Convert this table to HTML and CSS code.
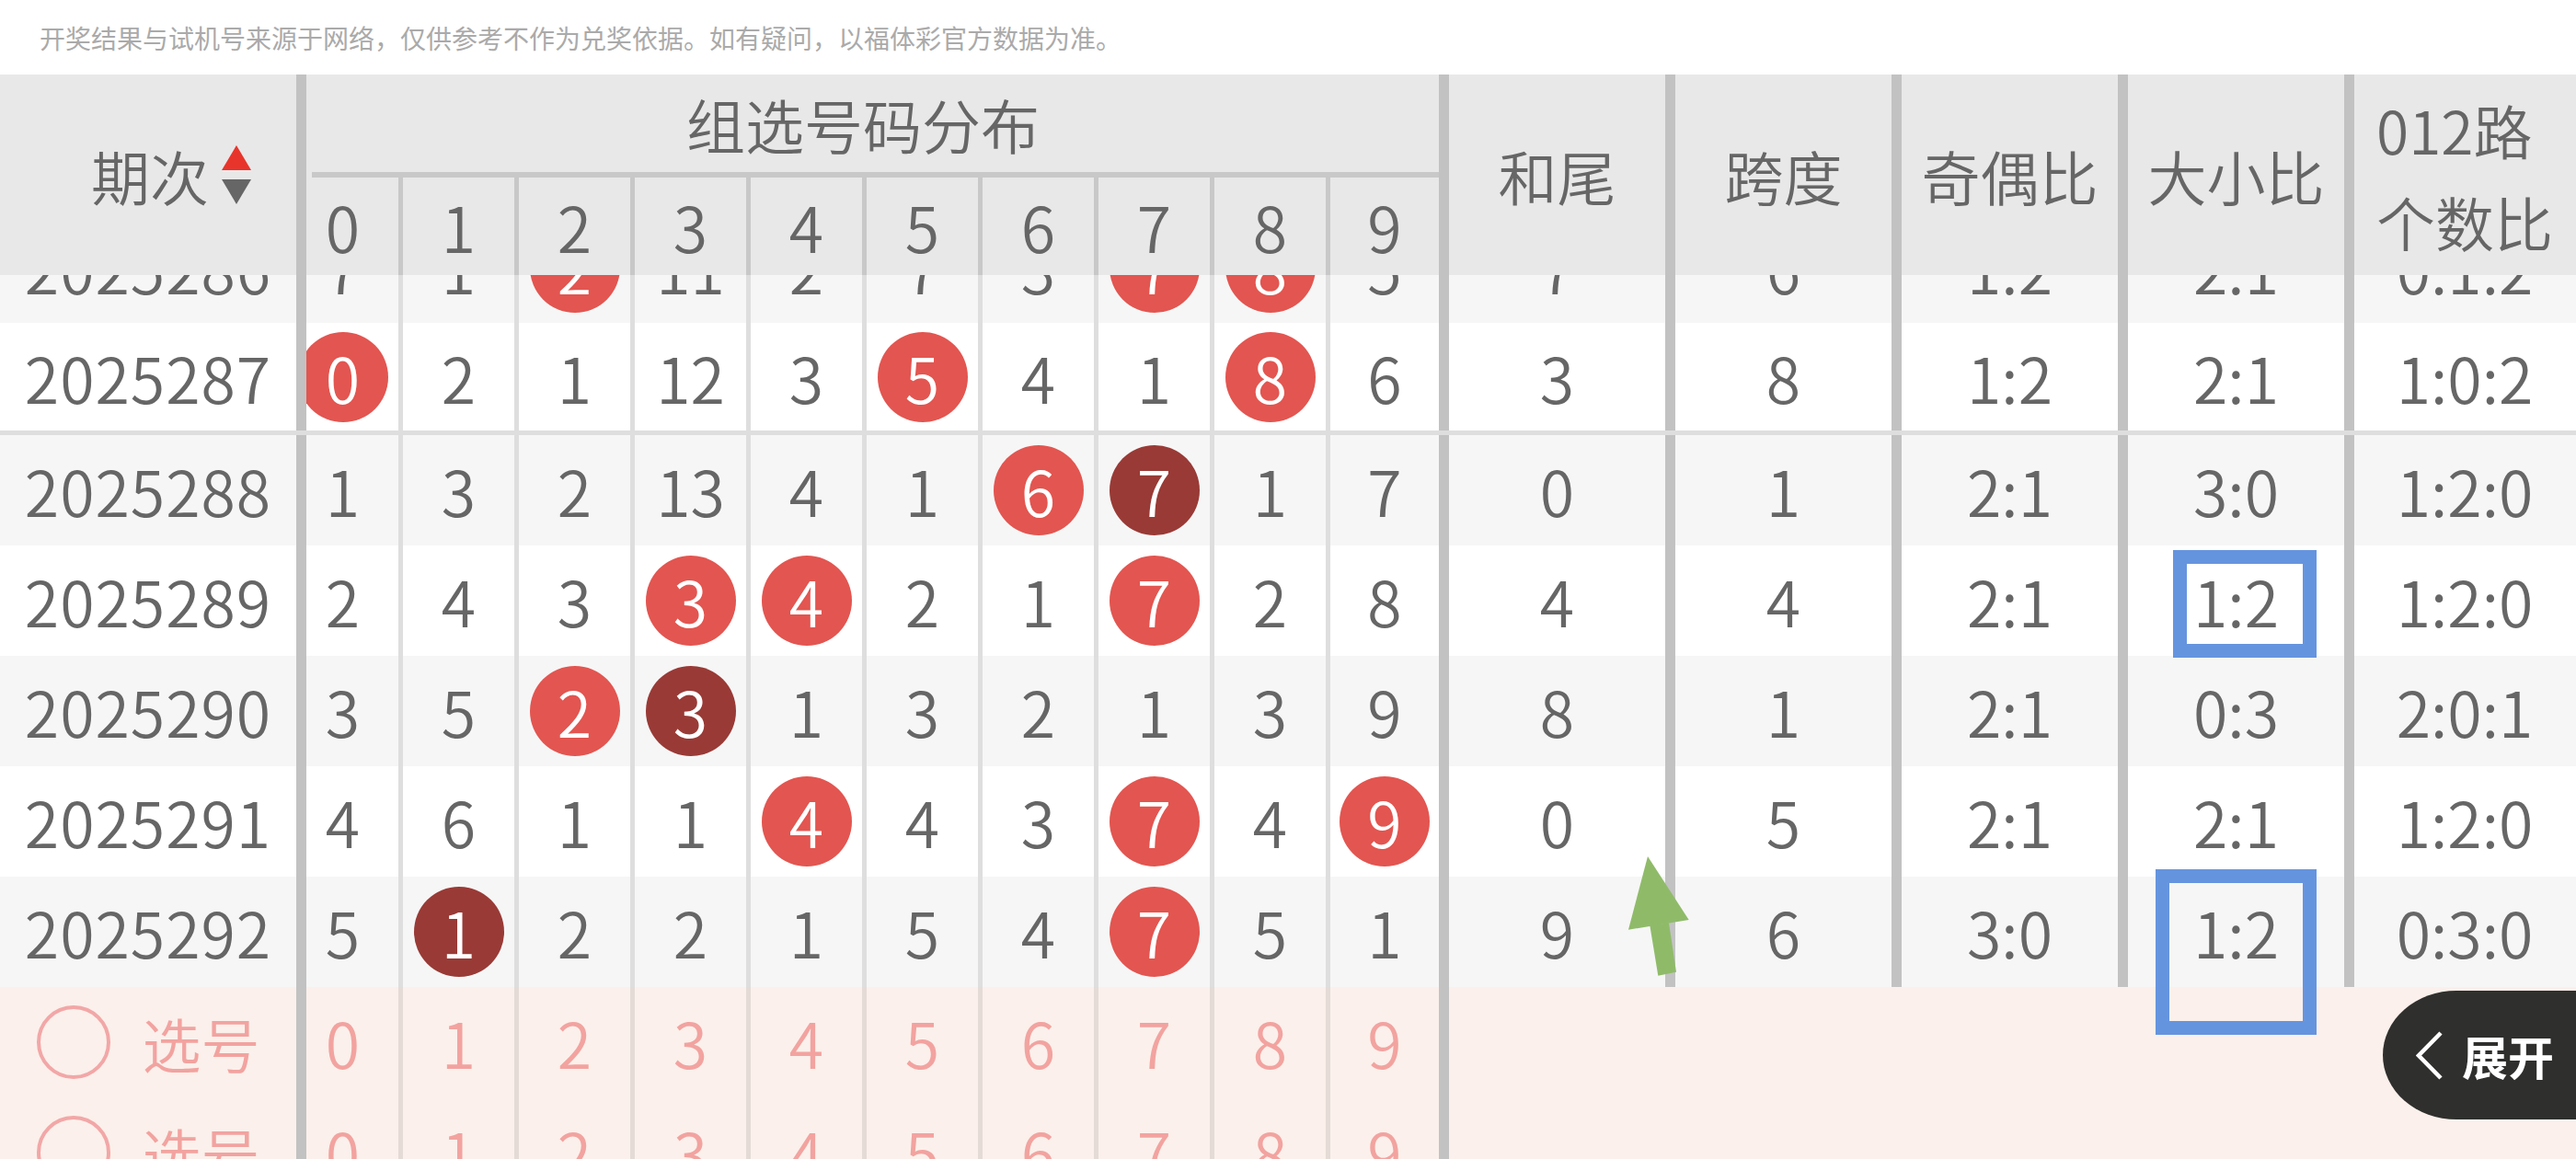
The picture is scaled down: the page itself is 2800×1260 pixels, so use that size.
FILE: index.html
```html
<!DOCTYPE html>
<html lang="zh-CN">
<head>
<meta charset="utf-8">
<title>组选号码分布</title>
<link rel="stylesheet" href="styles.css">
</head>
<body>
<div class="page">
  <div class="notice">开奖结果与试机号来源于网络，仅供参考不作为兑奖依据。如有疑问，以福体彩官方数据为准。</div>
  <div class="sheet">
    <div class="head">
      <div class="h-period">
        <span class="h-label">期次</span>
        <svg class="sort" width="32" height="64" viewBox="0 0 32 64"><polygon points="16,0 32,27 0,27" fill="#e8352b"/><polygon points="0,37 32,37 16,64" fill="#666"/></svg>
      </div>
      <div class="track">
        <div class="h-cells">
          <div class="h-group">
            <div class="h-title">组选号码分布</div>
            <div class="h-rule"></div>
            <div class="h-digits">
              <div class="hd">0</div><div class="hd">1</div><div class="hd">2</div><div class="hd">3</div><div class="hd">4</div><div class="hd">5</div><div class="hd">6</div><div class="hd">7</div><div class="hd">8</div><div class="hd last">9</div>
            </div>
          </div>
          <div class="hr">和尾</div>
          <div class="hr">跨度</div>
          <div class="hr">奇偶比</div>
          <div class="hr">大小比</div>
          <div class="hr end"><span class="two">012路<br>个数比</span></div>
        </div>
      </div>
    </div>
    <div class="body">
      <div class="body-inner">
        <div class="row alt">
          <div class="period">2025286</div>
          <div class="track"><div class="cells">
            <div class="d">7</div><div class="d">1</div><div class="d"><span class="ball">2</span></div><div class="d">11</div><div class="d">2</div><div class="d">7</div><div class="d">3</div><div class="d"><span class="ball">7</span></div><div class="d"><span class="ball">8</span></div><div class="d last">5</div>
            <div class="r">7</div><div class="r">6</div><div class="r">1:2</div><div class="r">2:1</div><div class="r end">0:1:2</div>
          </div></div>
        </div>
        <div class="row gend">
          <div class="period">2025287</div>
          <div class="track"><div class="cells">
            <div class="d"><span class="ball">0</span></div><div class="d">2</div><div class="d">1</div><div class="d">12</div><div class="d">3</div><div class="d"><span class="ball">5</span></div><div class="d">4</div><div class="d">1</div><div class="d"><span class="ball">8</span></div><div class="d last">6</div>
            <div class="r">3</div><div class="r">8</div><div class="r">1:2</div><div class="r">2:1</div><div class="r end">1:0:2</div>
          </div></div>
        </div>
        <div class="row alt">
          <div class="period">2025288</div>
          <div class="track"><div class="cells">
            <div class="d">1</div><div class="d">3</div><div class="d">2</div><div class="d">13</div><div class="d">4</div><div class="d">1</div><div class="d"><span class="ball">6</span></div><div class="d"><span class="ball dup">7</span></div><div class="d">1</div><div class="d last">7</div>
            <div class="r">0</div><div class="r">1</div><div class="r">2:1</div><div class="r">3:0</div><div class="r end">1:2:0</div>
          </div></div>
        </div>
        <div class="row">
          <div class="period">2025289</div>
          <div class="track"><div class="cells">
            <div class="d">2</div><div class="d">4</div><div class="d">3</div><div class="d"><span class="ball">3</span></div><div class="d"><span class="ball">4</span></div><div class="d">2</div><div class="d">1</div><div class="d"><span class="ball">7</span></div><div class="d">2</div><div class="d last">8</div>
            <div class="r">4</div><div class="r">4</div><div class="r">2:1</div><div class="r">1:2</div><div class="r end">1:2:0</div>
          </div></div>
        </div>
        <div class="row alt">
          <div class="period">2025290</div>
          <div class="track"><div class="cells">
            <div class="d">3</div><div class="d">5</div><div class="d"><span class="ball">2</span></div><div class="d"><span class="ball dup">3</span></div><div class="d">1</div><div class="d">3</div><div class="d">2</div><div class="d">1</div><div class="d">3</div><div class="d last">9</div>
            <div class="r">8</div><div class="r">1</div><div class="r">2:1</div><div class="r">0:3</div><div class="r end">2:0:1</div>
          </div></div>
        </div>
        <div class="row">
          <div class="period">2025291</div>
          <div class="track"><div class="cells">
            <div class="d">4</div><div class="d">6</div><div class="d">1</div><div class="d">1</div><div class="d"><span class="ball">4</span></div><div class="d">4</div><div class="d">3</div><div class="d"><span class="ball">7</span></div><div class="d">4</div><div class="d last"><span class="ball">9</span></div>
            <div class="r">0</div><div class="r">5</div><div class="r">2:1</div><div class="r">2:1</div><div class="r end">1:2:0</div>
          </div></div>
        </div>
        <div class="row alt">
          <div class="period">2025292</div>
          <div class="track"><div class="cells">
            <div class="d">5</div><div class="d"><span class="ball dup">1</span></div><div class="d">2</div><div class="d">2</div><div class="d">1</div><div class="d">5</div><div class="d">4</div><div class="d"><span class="ball">7</span></div><div class="d">5</div><div class="d last">1</div>
            <div class="r">9</div><div class="r">6</div><div class="r">3:0</div><div class="r">1:2</div><div class="r end">0:3:0</div>
          </div></div>
        </div>
        <div class="row pick">
          <div class="period"><span class="ring"></span><span class="pick-label">选号</span></div>
          <div class="track"><div class="cells">
            <div class="d">0</div><div class="d">1</div><div class="d">2</div><div class="d">3</div><div class="d">4</div><div class="d">5</div><div class="d">6</div><div class="d">7</div><div class="d">8</div><div class="d last">9</div>
            <div class="blank"></div>
          </div></div>
        </div>
        <div class="row pick">
          <div class="period"><span class="ring"></span><span class="pick-label">选号</span></div>
          <div class="track"><div class="cells">
            <div class="d">0</div><div class="d">1</div><div class="d">2</div><div class="d">3</div><div class="d">4</div><div class="d">5</div><div class="d">6</div><div class="d">7</div><div class="d">8</div><div class="d last">9</div>
            <div class="blank"></div>
          </div></div>
        </div>
      </div>
    </div>
  </div>

  <div class="mark mark-a"></div>
  <div class="mark mark-b"></div>
  <svg class="pointer" width="80" height="140" viewBox="0 0 80 140">
    <polygon points="31,6 75.7,75 10,85.7" fill="#8fbb69"/>
    <polygon points="33.3,81 54,78.3 62,131.7 42.3,135.7" fill="#8fbb69"/>
  </svg>
  <div class="expand">
    <svg class="chev" width="30" height="53" viewBox="0 0 30 53"><polyline points="27,2 3,26.5 27,51" fill="none" stroke="#fff" stroke-width="4.5"/></svg>
    <span class="expand-label">展开</span>
  </div>
</div>
</body>
</html>
```

FILE: styles.css
```css
* { box-sizing: content-box; }
html, body { margin: 0; padding: 0; background: #fff; }
body {
  font-family: "Noto Sans CJK SC", "Noto Sans", sans-serif;
  font-weight: 350;
  color: #666;
}
.page {
  position: relative;
  width: 2800px;
  height: 1260px;
  overflow: hidden;
}
.notice {
  height: 81px;
  padding-left: 43px;
  display: flex;
  align-items: center;
  font-size: 28px;
  font-weight: 400;
  line-height: 1;
  color: #aaa;
  white-space: nowrap;
}
.sheet { display: flex; flex-direction: column; }

/* header */
.head {
  display: flex;
  height: 218px;
  background: #e8e8e8;
}
.h-period {
  width: 273px;
  padding-right: 49px;
  border-right: 11px solid #c2c2c2;
  display: flex;
  align-items: center;
  justify-content: flex-end;
  gap: 14px;
}
.h-label { font-size: 64px; line-height: 1; }
.sort { display: block; }
.track { flex: 1; overflow: hidden; }
.h-cells { display: flex; margin-left: -21px; height: 218px; }
.h-group {
  width: 1252px;
  border-right: 11px solid #c2c2c2;
  display: flex;
  flex-direction: column;
}
.h-title {
  height: 106px;
  display: flex;
  align-items: center;
  justify-content: center;
  font-size: 64px;
  line-height: 1;
}
.h-rule { height: 6px; margin-left: 27px; background: #c8c8c8; }
.h-digits { display: flex; height: 106px; }
.hd {
  width: 121px;
  border-right: 5px solid #c8c8c8;
  display: flex;
  align-items: center;
  justify-content: center;
  font-size: 68px;
  line-height: 1;
}
.hd.last { width: 118px; border-right: 0; }
.hr {
  width: 235px;
  border-right: 11px solid #c2c2c2;
  display: flex;
  align-items: center;
  justify-content: center;
  font-size: 64px;
  line-height: 1;
}
.hr.end { width: 240px; border-right: 0; }
.two { line-height: 100px; text-align: left; }

/* body */
.body { height: 961px; overflow: hidden; }
.body-inner { margin-top: -68px; }
.row {
  display: flex;
  height: 120px;
  background: #fff;
}
.row.alt { background: #f6f6f6; }
.row.gend { height: 117px; border-bottom: 5px solid #dedede; }
.row.pick { background: #fbf0eb; color: #f2a3a0; }
.period {
  width: 322px;
  border-right: 11px solid #c2c2c2;
  display: flex;
  align-items: center;
  justify-content: center;
  font-size: 68px;
  letter-spacing: 1px;
  line-height: 1;
}
.cells { display: flex; margin-left: -21px; height: 100%; }
.d {
  width: 121px;
  border-right: 5px solid #dedede;
  display: flex;
  align-items: center;
  justify-content: center;
  font-size: 68px;
  line-height: 1;
}
.d.last { width: 118px; border-right: 11px solid #c2c2c2; }
.pick .d { border-right-color: #e4dad6; }
.pick .d.last { border-right-color: #c2c2c2; }
.r {
  width: 235px;
  border-right: 11px solid #c2c2c2;
  display: flex;
  align-items: center;
  justify-content: center;
  font-size: 68px;
  line-height: 1;
}
.r.end { width: 240px; border-right: 0; }
.blank { flex: 1; }
.ball {
  width: 98px;
  height: 98px;
  flex: none;
  border-radius: 50%;
  background: #e35550;
  color: #fff;
  display: flex;
  align-items: center;
  justify-content: center;
}
.ball.dup { background: #993a36; }
.ring {
  width: 72px;
  height: 72px;
  border: 4px solid #f2a7a7;
  border-radius: 50%;
}
.pick .period { gap: 35px; letter-spacing: 0; }
.pick-label { font-size: 64px; line-height: 1; }

/* overlays */
.mark {
  position: absolute;
  border: 15px solid #6594df;
}
.mark-a { left: 2362px; top: 598px; width: 126px; height: 87px; }
.mark-b { left: 2343px; top: 945px; width: 145px; height: 150px; }
.pointer { position: absolute; left: 1760px; top: 925px; }
.expand {
  position: absolute;
  left: 2590px;
  top: 1077px;
  width: 240px;
  height: 140px;
  background: #2f2f2d;
  border-radius: 80px 0 0 80px / 70px 0 0 70px;
  display: flex;
  align-items: center;
  padding-left: 36px;
  box-sizing: border-box;
  gap: 20px;
  color: #fff;
}
.chev { display: block; }
.expand-label { font-size: 50px; font-weight: 700; line-height: 1; }
```
